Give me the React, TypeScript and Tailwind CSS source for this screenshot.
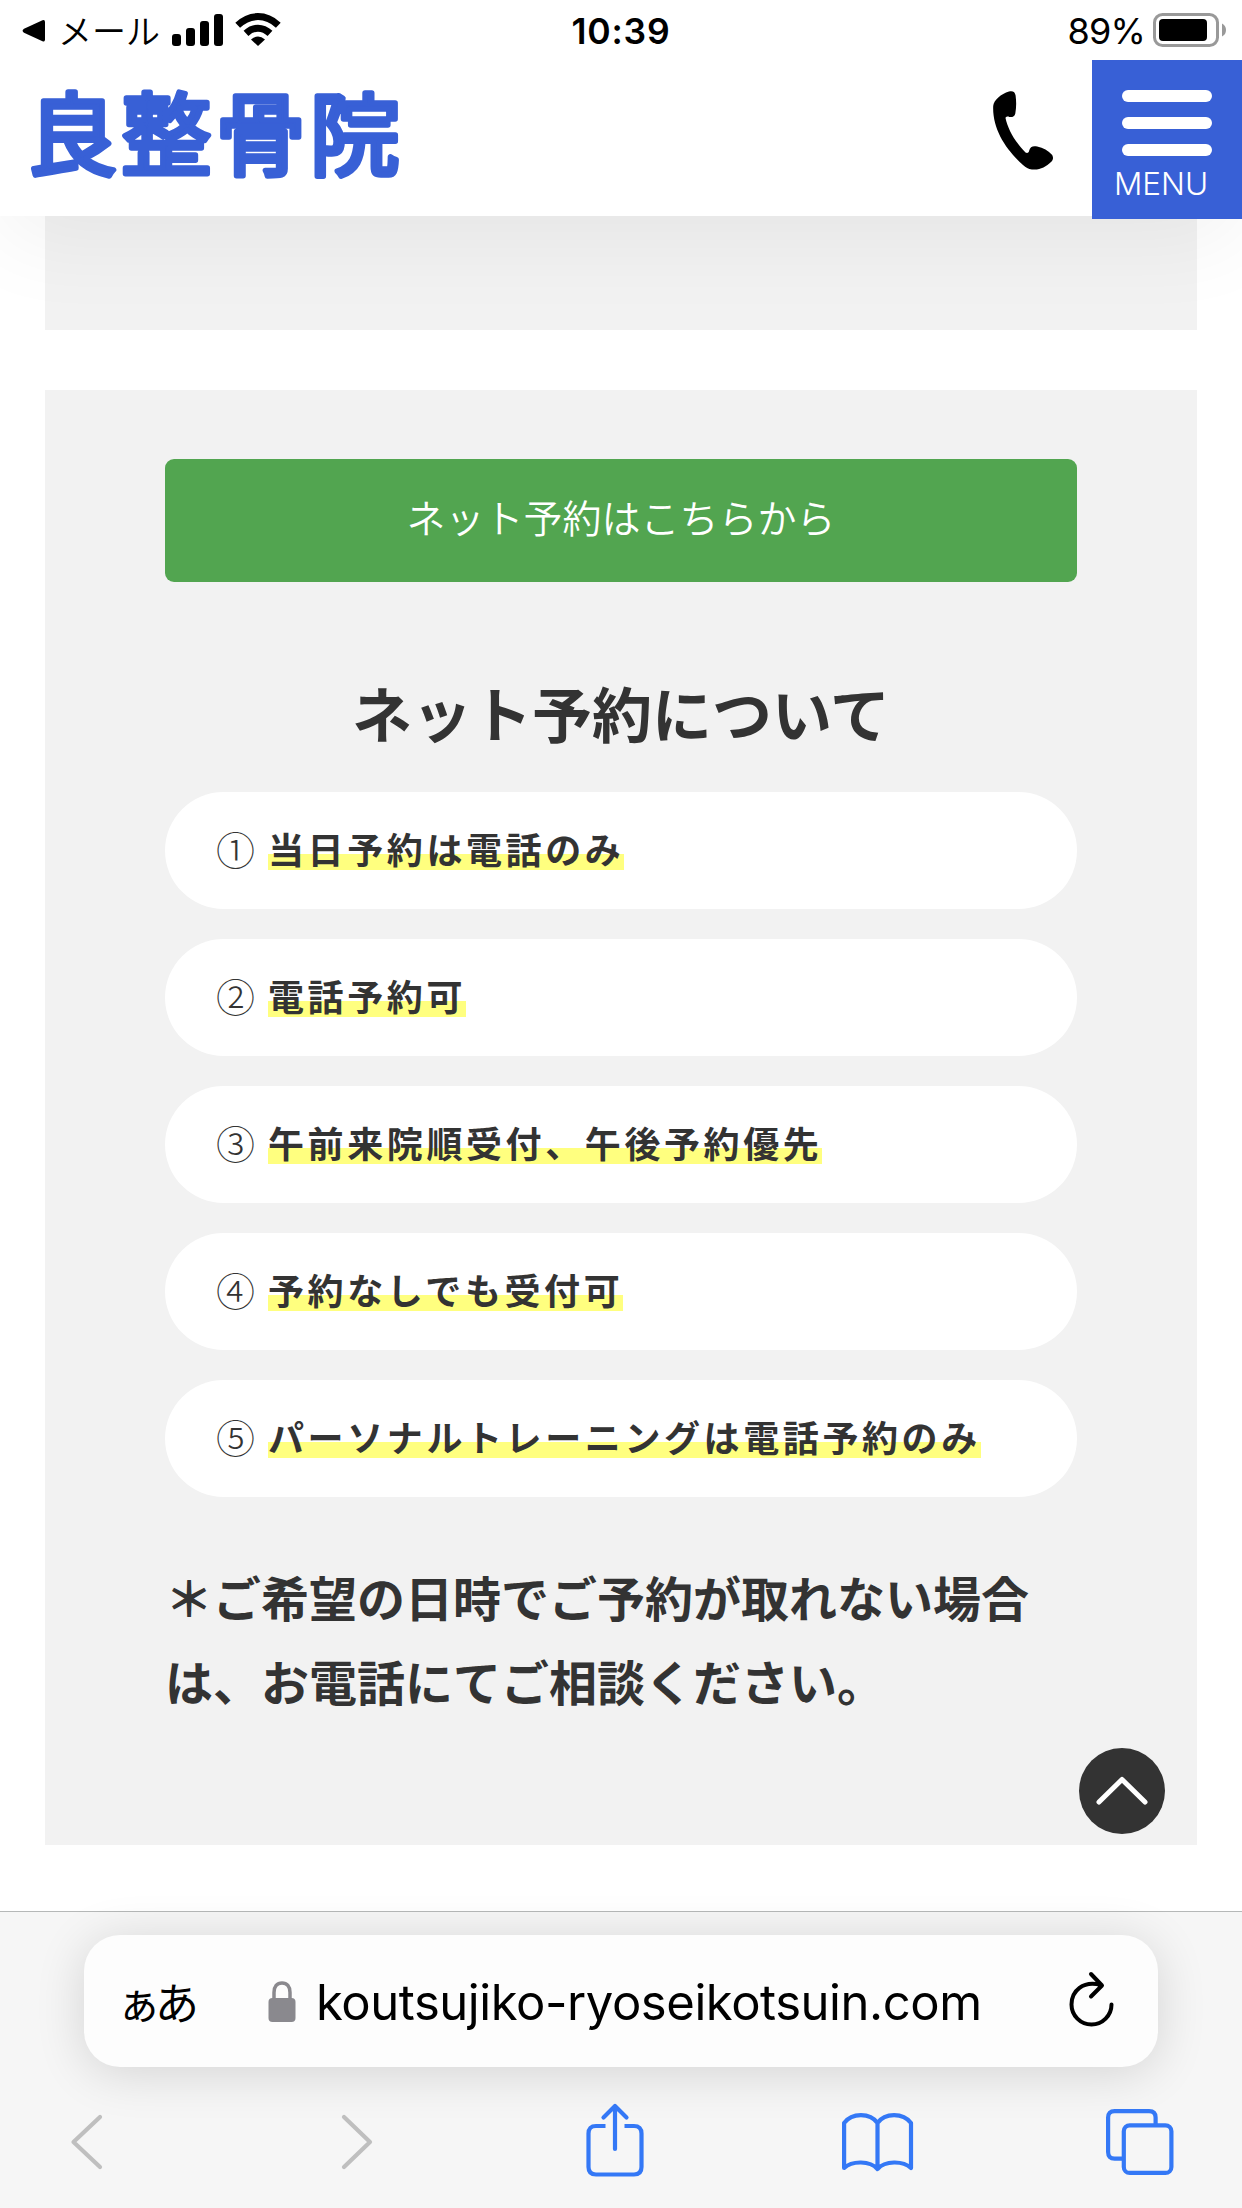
const items = [
  ['①', '当日予約は電話のみ'],
  ['②', '電話予約可'],
  ['③', '午前来院順受付、午後予約優先'],
  ['④', '予約なしでも受付可'],
  ['⑤', 'パーソナルトレーニングは電話予約のみ'],
];

function StatusBar() {
  return (
    <div className="relative flex h-[60px] shrink-0 items-center justify-between pl-[22px] pr-[15px] text-black">
      <div className="flex items-center">
        <svg width="24" height="24" viewBox="0 0 24 24" className="mt-0.5">
          <path d="M2 9.800 20.500 1.200Q23 .300 23 3v17.500q0 2.700-2.500 1.700L2 13.700Q-.800 11.800 2 9.800Z" fill="#000" />
        </svg>
        <span className="ml-[12px] w-[114px] whitespace-nowrap text-[34px] leading-[60px] font-[350] font-['Noto_Sans_CJK_JP',sans-serif]">メール</span>
        <svg width="52" height="33" viewBox="0 0 52 33">
          <rect x="0" y="20" width="9" height="12" rx="3" />
          <rect x="14" y="14" width="9" height="18" rx="3" />
          <rect x="28" y="7" width="9" height="25" rx="3" />
          <rect x="42" y="0" width="9" height="32" rx="3" />
        </svg>
        <svg width="46" height="34" viewBox="0 0 46 34" className="ml-[11px]" fill="none" stroke="#000">
          <path d="M2.700 12.200Q12 3.600 23 3.600T43.300 12.200" strokeWidth="7" />
          <path d="M11 20.400Q16.500 15.200 23 15.200T35 20.400" strokeWidth="7" />
          <path d="M23 33 16 26.500Q23 20.500 30 26.500Z" fill="#000" stroke="none" />
        </svg>
      </div>
      <div className="absolute inset-x-0 top-0 text-center text-[35.500px] leading-[63px] font-semibold tracking-[0.800px] font-['Inter',sans-serif]">10:39</div>
      <div className="flex items-center">
        <span className="mr-[8px] mt-0.5 text-[36px] leading-[60px] tracking-[-0.800px] font-['Inter',sans-serif]">89%</span>
        <svg width="74" height="34" viewBox="0 0 74 34">
          <rect x="1.500" y="1.500" width="63" height="31" rx="8" fill="none" stroke="#999" strokeWidth="3" />
          <rect x="6" y="6" width="48" height="22" rx="4" />
          <path d="M69 10.500q4 2 4 6.500t-4 6.500Z" fill="#999" />
        </svg>
      </div>
    </div>
  );
}

function SiteHeader() {
  return (
    <div className="flex h-[156px] shrink-0 items-start justify-between">
      <svg width="420" height="156" viewBox="0 0 420 156" role="img" aria-label="良整骨院">
        <text x="27" y="108" textLength="373" fontSize="90" fill="#3860d6" stroke="#3860d6" strokeWidth="5.500" strokeLinejoin="round" className="font-normal font-['Noto_Sans_CJK_JP',sans-serif]">良整骨院</text>
      </svg>
      <div className="flex items-start">
        <svg width="60" height="80" viewBox="0 0 60 80" className="mr-[39px] mt-[31px]">
          <path d="M.2 15C.8 9 8 3 16 .500c4-.900 6 .500 6.600 4 .8 6 .8 12-.3 18-.7 3-3 4-6 3.500-1.500-.900-3.400-.400-3.800 1C15 39 23 52 32.500 61.500c2 1 3.500 0 3.700-2 .8-4 4-5 8-4 6 1.300 11 4 15 8.500 1.500 3 .800 5-1.200 7C53 76 46 79.500 39 78.400c-4-.600-6-2-9-4.500C13 59-.8 38 .2 15Z" />
        </svg>
        <div className="flex h-[159px] w-[150px] flex-col items-center bg-[#3860d6] pt-[30px]">
          <div className="flex flex-col gap-[15px]">
            <div className="h-3 w-[90px] rounded-full bg-white" />
            <div className="h-3 w-[90px] rounded-full bg-white" />
            <div className="h-3 w-[90px] rounded-full bg-white" />
          </div>
          <span className="mr-[12px] mt-[8px] text-[31.500px] leading-[40px] font-light text-white font-['Inter',sans-serif]">MENU</span>
        </div>
      </div>
    </div>
  );
}

function BottomBar() {
  return (
    <div className="absolute inset-x-0 bottom-0 h-[297px] border-t border-[#b6b8b8] bg-[#f6f6f6]">
      <div className="mx-auto mt-[23px] flex h-[132px] w-[1074px] items-center rounded-[36px] bg-[#fdfdfd] pl-[33px] pr-[43px] text-black shadow-[0_6px_50px_rgba(0,0,0,0.14)]">
        <span className="w-[151px] whitespace-nowrap text-[44px] leading-[60px] tracking-[-6px] font-['Noto_Sans_CJK_JP',sans-serif]">ぁあ</span>
        <svg width="28" height="42" viewBox="0 0 28 42" className="mt-0.5">
          <path d="M6 19V11.500C6 5.500 9 2 14 2s8 3.500 8 9.500V19" fill="none" stroke="#8a898e" strokeWidth="3.500" />
          <rect x=".5" y="17" width="27" height="24" rx="4" fill="#8a898e" />
        </svg>
        <span className="ml-[20px] mt-1 flex-1 whitespace-nowrap text-[49px] leading-[60px] tracking-[-0.450px] font-['Inter',sans-serif]">koutsujiko-ryoseikotsuin.com</span>
        <svg width="46" height="56" viewBox="0 0 46 56" className="-mt-1" fill="none" stroke="#000" strokeWidth="4" strokeLinecap="round" strokeLinejoin="round">
          <path d="M32 14C14 9 2.500 20 2.500 33.500a20 20 0 0 0 40 0M22 3l11 11.500L22 25.500" />
        </svg>
      </div>
      <div className="flex h-[141px] items-start pl-[70px] pt-[36px]">
        <svg width="34" height="60" viewBox="0 0 34 60" className="mt-[9px]" fill="none" stroke="#bfbfbf" strokeWidth="4.200" strokeLinecap="round" strokeLinejoin="round"><path d="M30 5 3.500 30 30 55" /></svg>
        <svg width="34" height="60" viewBox="0 0 34 60" className="ml-[236px] mt-[9px]" fill="none" stroke="#bfbfbf" strokeWidth="4.200" strokeLinecap="round" strokeLinejoin="round"><path d="m4 5 26 25L4 55" /></svg>
        <svg width="58" height="74" viewBox="0 0 58 74" className="ml-[212px]" fill="none" stroke="#3478f6" strokeWidth="4.200"><path d="M19.500 23H10q-7.500 0-7.500 7.500v33.500q0 7.500 7.500 7.500h38q7.500 0 7.500-7.500V30.500Q55.500 23 48 23h-9.500" /><path d="M29 46V3M17.500 14.500 29 3l11.500 11.500" strokeLinecap="round" strokeLinejoin="round" /></svg>
        <svg width="72" height="60" viewBox="0 0 72 60" className="ml-[198px] mt-[9px]" fill="none" stroke="#3478f6" strokeWidth="4.200" strokeLinejoin="round"><path d="M35.500 57V11C28 .500 10 .500 2.100 11v45C10 48.500 28 48.500 35.500 57 43 48.500 61 48.500 69 56V11C61 .500 43 .500 35.500 11" /></svg>
        <svg width="68" height="68" viewBox="0 0 68 68" className="ml-[192px] mt-[6px]" fill="none" stroke="#3478f6" strokeWidth="4.200"><rect x="17.800" y="16.300" width="47.600" height="47.600" rx="6" /><path d="M18 49.600H8.600q-6.500 0-6.500-6.500V8.600q0-6.500 6.500-6.500h34.500q6.500 0 6.500 6.500V16" /></svg>
      </div>
    </div>
  );
}

export default function App() {
  return (
    <div className="relative flex h-[2208px] w-[1242px] flex-col overflow-hidden bg-white text-[#333]">
      <header className="relative z-10 h-[216px] shrink-0 bg-white shadow-[0_24px_90px_rgba(0,0,0,0.055)]">
        <StatusBar />
        <SiteHeader />
      </header>
      <div className="mx-[45px] h-[114px] shrink-0 bg-[#f2f2f2]" />
      <main className="mx-[45px] mt-[60px] h-[1455px] shrink-0 bg-[#f2f2f2] px-[120px] pt-[69px] font-['Noto_Sans_CJK_JP',sans-serif]">
        <button className="block h-[123px] w-full rounded-[9px] bg-[#52a550] pb-[9px] text-[39px] leading-[114px] font-[350] text-white">ネット予約はこちらから</button>
        <h2 className="mt-[82px] text-center text-[60px] leading-[96px] font-bold">ネット予約について</h2>
        <ul className="mt-[32px] flex flex-col gap-[30px]">
          {items.map(([n, t]) => (
            <li key={n} className="flex h-[117px] items-center rounded-full bg-white pb-[6px] pl-[51px] text-[36px] leading-[54px] tracking-[3.600px]">
              <span className="w-[52px] text-[39px] font-light">{n}</span>
              <span className="bg-[linear-gradient(transparent_33px,#ffff7f_33px,#ffff7f_49px,transparent_49px)] font-bold">{t}</span>
            </li>
          ))}
        </ul>
        <p className="mt-[57px] w-[870px] text-[48px] leading-[84px] font-bold">＊ご希望の日時でご予約が取れない場合は、お電話にてご相談ください。</p>
      </main>
      <button aria-label="ページトップへ" className="absolute left-[1079px] top-[1748px] flex size-[86px] items-center justify-center rounded-full bg-[#333]">
        <svg width="52" height="30" viewBox="0 0 52 30" fill="none" stroke="#fff" strokeWidth="5" strokeLinecap="round" strokeLinejoin="round"><path d="M3 26 26 3.500 49 26" /></svg>
      </button>
      <BottomBar />
    </div>
  );
}
